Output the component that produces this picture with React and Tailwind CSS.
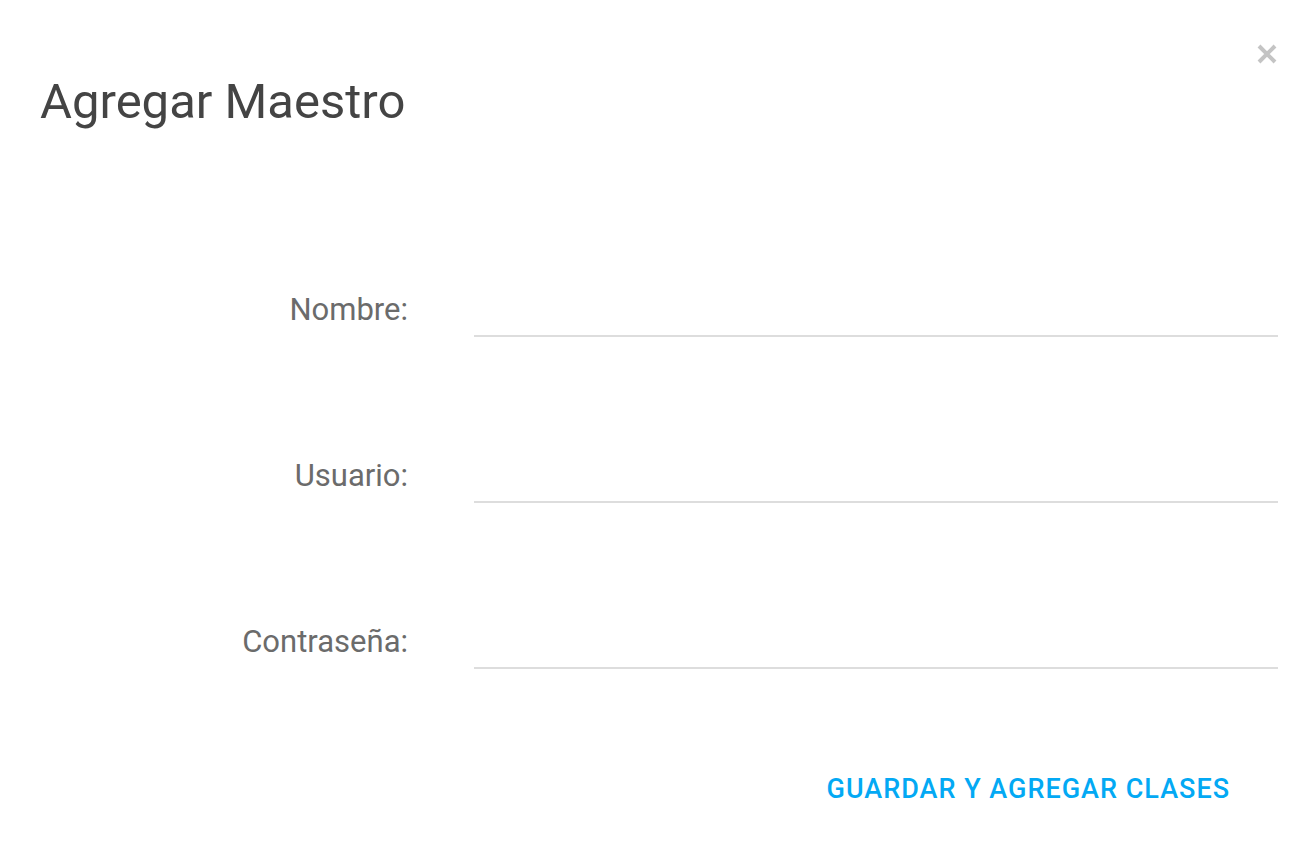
import React from "react";

function Row({ label }) {
  return (
    <div className="flex items-end h-[48px]">
      <div className="w-[368px] shrink-0 text-right pb-[9px] text-[31px] leading-[36px] text-[#6b6b6b]">
        {label}
      </div>
      <div className="ml-[66px] w-[804px] h-[48px] border-b-2 border-[#dddddd]" />
    </div>
  );
}

export default function App() {
  return (
    <div
      className="relative w-[1314px] h-[860px] bg-white overflow-hidden"
      style={{ fontFamily: "Roboto, 'Liberation Sans', sans-serif" }}
    >
      <svg
        className="absolute left-[1256px] top-[43px]"
        width="22"
        height="22"
        viewBox="0 0 22 22"
      >
        <path
          d="M3 3 L19 19 M19 3 L3 19"
          stroke="#c4c4c4"
          strokeWidth="4"
          strokeLinecap="butt"
          fill="none"
        />
      </svg>
      <div className="pt-[74px] pl-[40px]">
        <h1 className="text-[49px] leading-[56px] text-[#444444] font-normal">
          Agregar Maestro
        </h1>
      </div>
      <div className="mt-[159px] pl-[40px] flex flex-col gap-[118px]">
        <Row label="Nombre:" />
        <Row label="Usuario:" />
        <Row label="Contraseña:" />
      </div>
      <div className="mt-[104px] flex justify-end pr-[84px]">
        <button className="text-[27px] leading-[32px] font-medium tracking-[1px] text-[#03a9f4] uppercase">
          Guardar y agregar clases
        </button>
      </div>
    </div>
  );
}
